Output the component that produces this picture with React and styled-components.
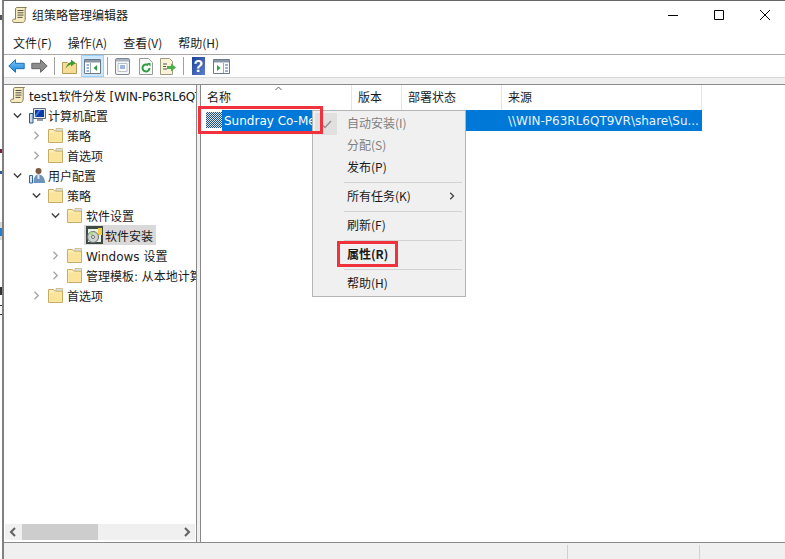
import React from "react";
import styled, { createGlobalStyle } from "styled-components";

const UI_FONT = `"Noto Sans CJK SC", "Liberation Sans", sans-serif`;
const DATA_FONT = `"DejaVu Sans", "Noto Sans CJK SC", sans-serif`;

const Global = createGlobalStyle`
  html, body { margin: 0; padding: 0; background: #fff; }
  body { width: 785px; height: 559px; overflow: hidden; font-family: ${UI_FONT}; font-size: 12px; color: #1a1a1a; }
`;

const Desktop = styled.div`
  display: flex;
  width: 785px;
  height: 559px;
  overflow: hidden;
`;

const Strip = styled.div`
  width: 2px;
  flex: none;
  position: relative;
`;

const Chip = styled.div`
  position: absolute;
  left: 0;
  width: 2px;
  top: ${p => p.$y}px;
  height: ${p => p.$h}px;
  background: ${p => p.$c};
`;

const Win = styled.div`
  width: 783px;
  height: 559px;
  flex: none;
  border-left: 2px solid #808080;
  border-top: 1px solid #666;
  display: flex;
  flex-direction: column;
  background: #fff;
  box-sizing: border-box;
`;

const TitleBar = styled.div`
  height: 27px;
  padding: 0 0 4px 8px;
  display: flex;
  align-items: center;
  gap: 4px;
`;

const Caption = styled.div`
  display: flex;
  margin-left: auto;
  margin-right: -3px;
  align-items: center;
`;

const CapBtn = styled.div`
  width: 46px;
  height: 27px;
  display: flex;
  align-items: center;
  justify-content: center;
`;

const MenuBar = styled.div`
  height: 20px;
  padding: 0 0 2px 9px;
  display: flex;
  gap: 16px;
  align-items: center;
  border-bottom: 1px solid #a9a9a9;
`;

const Toolbar = styled.div`
  height: 22px;
  display: flex;
  align-items: center;
  padding-left: 1px;
  border-bottom: 1px solid #d8d8d8;
`;

const Tool = styled.div`
  width: 23px;
  height: 22px;
  display: flex;
  align-items: center;
  justify-content: center;
  box-sizing: border-box;
  background: ${p => (p.$on ? "#cce8ff" : "transparent")};
  border: 1px solid ${p => (p.$on ? "#99d1ff" : "transparent")};
`;

const Divider = styled.div`
  width: 1px;
  height: 18px;
  background: #a0a0a0;
  margin: 0 3px;
`;

const Gap = styled.div`
  height: 6px;
  background: #f0f0f0;
`;

const Panes = styled.div`
  flex: 1;
  min-height: 0;
  display: flex;
  gap: 3px;
  background: #f0f0f0;
  border-top: 1px solid #8a8a8a;
  border-bottom: 1px solid #8a8a8a;
  font-family: ${DATA_FONT};
`;

const TreePane = styled.div`
  width: 191px;
  border-right: 1px solid #8a8a8a;
  background: #fff;
  display: flex;
  flex-direction: column;
  padding: 0 0 1px 1px;
`;

const Tree = styled.div`
  flex: 1;
`;

const TreeRow = styled.div`
  height: 20px;
  display: flex;
  align-items: center;
  padding-left: ${p => p.$depth * 19 + 3}px;
  white-space: nowrap;
  overflow: hidden;
`;

const Twist = styled.div`
  width: 19px;
  flex: none;
  display: flex;
  justify-content: center;
`;

const Node = styled.div`
  display: flex;
  align-items: center;
  height: 20px;
  padding: 0 3px 0 2px;
  background: ${p => (p.$on ? "#d9d9d9" : "transparent")};
  letter-spacing: ${p => (p.$root ? "-0.2px" : "0")};
`;

const NodeIcon = styled.div`
  width: 17px;
  height: 17px;
  flex: none;
  margin-right: 2px;
  display: flex;
  align-items: center;
`;

const HScroll = styled.div`
  height: 16px;
  background: #f0f0f0;
  margin: 0 1px 1px 0;
  display: flex;
  align-items: center;
  justify-content: space-between;
  position: relative;
`;

const Thumb = styled.div`
  position: absolute;
  left: 17px;
  width: 76px;
  top: 0;
  bottom: 0;
  background: #cdcdcd;
`;

const ListPane = styled.div`
  flex: 1;
  background: #fff;
  border-left: 1px solid #8a8a8a;
  position: relative;
`;

const Head = styled.div`
  display: flex;
  height: 25px;
`;

const HeadCell = styled.div`
  width: ${p => p.$w}px;
  box-sizing: border-box;
  padding: 2px 0 0 6px;
  border-right: 1px solid #e5e5e5;
  line-height: 20px;
  position: relative;
  font-family: ${UI_FONT};
`;

const SortCaret = styled.svg`
  position: absolute;
  left: 74px;
  top: 1px;
`;

const Row = styled.div`
  display: flex;
  height: 21px;
  line-height: 23px;
  width: 501px;
`;

const RowIcon = styled.div`
  width: 16px;
  height: 16px;
  margin: 2px 0 0 5px;
  flex: none;
  background: repeating-conic-gradient(#1c4f8c 0 25%, #dfe8ee 0 50%) 0 0 / 2px 2px;
`;

const RowName = styled.div`
  width: 127px;
  background: #0078d7;
  color: #fff;
  padding-left: 2px;
  white-space: nowrap;
  overflow: hidden;
  box-sizing: border-box;
`;

const RowRest = styled.div`
  flex: 1;
  background: #0078d7;
  color: #e8f3fb;
  padding-left: 159px;
  white-space: nowrap;
  overflow: hidden;
`;

const Mark = styled.div`
  position: absolute;
  box-sizing: border-box;
  border: 3px solid #f0323c;
  left: ${p => p.$x}px;
  top: ${p => p.$y}px;
  width: ${p => p.$w}px;
  height: ${p => p.$h}px;
  z-index: 5;
`;

const Menu = styled.div`
  position: absolute;
  left: 111px;
  top: 25px;
  width: 154px;
  height: 187px;
  box-sizing: border-box;
  background: #f0f0f0;
  border: 1px solid #b5b5b5;
  padding: 1px 0 0 2px;
  z-index: 3;
  font-family: ${UI_FONT};
`;

const MenuItem = styled.div`
  height: 22px;
  line-height: 22px;
  padding-left: 32px;
  color: ${p => (p.$off ? "#7f7f7f" : "#1a1a1a")};
  font-weight: ${p => (p.$bold ? 700 : 400)};
  position: relative;
`;

const MenuSep = styled.div`
  height: 1px;
  background: #d2d2d2;
  margin: 4px 3px 2px 29px;
`;

const CheckBox = styled.div`
  position: absolute;
  left: 0;
  top: 1px;
  width: 22px;
  height: 22px;
  background: #e0e0e0;
  display: flex;
  align-items: center;
  justify-content: center;
`;

const SubArrow = styled.div`
  position: absolute;
  right: 9px;
  top: 7px;
  display: flex;
`;

const Status = styled.div`
  height: 16px;
  background: #f0f0f0;
  display: flex;
  justify-content: flex-end;
`;

const StatusCell = styled.div`
  width: ${p => p.$w}px;
  box-sizing: border-box;
  border-left: 1px solid #d0d0d0;
  margin-top: 2px;
`;

const Chevron = ({ open, dark, size = 9 }) => (
  <svg width={size} height={size} viewBox="0 0 9 9" fill="none" stroke={dark ? "#404040" : "#a6a6a6"} strokeWidth="1.4">
    {open ? <path d="M.8 2.5 4.5 6.2 8.2 2.5" /> : <path d="M2.5.8 6.2 4.5 2.5 8.2" />}
  </svg>
);

const Folder = () => (
  <svg width="15" height="15" viewBox="0 0 15 15">
    <path d="M.5 14.500V1.500h5l1 1.500h8v11.500z" fill="#fdeeb4" stroke="#c8ac66" />
    <path d="M1.500 4.500h12v9h-12z" fill="#fbe399" />
    <path d="M8 .5h6.500v2.500H8z" fill="#d4e4f0" stroke="#c8ac66" strokeWidth=".7" />
  </svg>
);

const Scroll = () => (
  <svg width="16" height="18" viewBox="0 0 16 18">
    <path d="M5 1.500h9.500c-1.200.8-1.500 2-1.300 3.500v8c0 2-1 3.500-2.700 3.500H2c-1-.4-1.500-1-1.500-2 0-.8.600-1.300 1.500-1.300h1.500V3c0-.8.600-1.500 1.500-1.500z" fill="#f5ebbf" stroke="#8a7f5c" />
    <path d="M5.500 4.500h6M5.500 6.800h6M5.500 9.100h6M5.500 11.400h5" stroke="#55554d" />
  </svg>
);

const Monitor = () => (
  <svg width="17" height="17" viewBox="0 0 17 17">
    <path d="M4.500 1.500h12v10h-12z" fill="#e3e8ee" stroke="#5f6c7c" />
    <path d="M6 3h9v7H6z" fill="#0c3aa6" />
    <path d="M6 8l4-5h2L7 10H6z" fill="#3f78d8" />
    <path d="M8 12h6v2H8z" fill="#8f9aa6" />
    <path d="M.5 6.500h3.500v9.500H.5z" fill="#cfd8e2" stroke="#1f5fa0" />
  </svg>
);

const Users = () => (
  <svg width="17" height="17" viewBox="0 0 17 17">
    <circle cx="9.500" cy="4" r="3" fill="#7d5a44" />
    <path d="M4.500 16c0-6 2-8.500 5-8.500s6.500 2.500 6.500 8.500z" fill="#6f93bd" />
    <path d="M8.500 8h2v4h-2z" fill="#dce7f2" />
    <path d="M.5 8.500h3v7.500h-3z" fill="#dce5ee" stroke="#2a68a5" />
  </svg>
);

const Disc = () => (
  <svg width="17" height="18" viewBox="0 0 17 18">
    <path d="M0 0h17v18H0z" fill="#3f4a44" />
    <path d="M2 3h13v13H2z" fill="#e9efe9" />
    <path d="M12 2h4v7h-4z" fill="#f0d040" />
    <circle cx="7" cy="11" r="5.500" fill="#cdd5d0" stroke="#6f6f6f" />
    <path d="M7 11 3 7.500A5.500 5.500 0 0 1 7 5.500z" fill="#a9d68a" />
    <circle cx="7" cy="11" r="1.500" fill="#fff" stroke="#6f6f6f" />
  </svg>
);

const Back = () => (
  <svg width="17" height="14" viewBox="0 0 17 14">
    <defs>
      <linearGradient id="backFill" x1="0" y1="0" x2="0" y2="1">
        <stop offset="0" stopColor="#7cc8f6" />
        <stop offset="1" stopColor="#1b83d8" />
      </linearGradient>
    </defs>
    <path d="M7.500.7.800 7l6.700 6.300V9.700h8.700V4.300H7.500z" fill="url(#backFill)" stroke="#1c70b8" />
  </svg>
);

const Forward = () => (
  <svg width="17" height="14" viewBox="0 0 17 14">
    <path d="M9.500.7 16.200 7l-6.700 6.300V9.700H.8V4.300h8.700z" fill="#8c8c8c" stroke="#666" />
  </svg>
);

const UpFolder = () => (
  <svg width="15" height="16" viewBox="0 0 15 16">
    <path d="M.5 4.500h5l1 1h8v10H.500z" fill="#f6dd96" stroke="#b59a58" />
    <path d="M3.500 11c1-4 3-6.500 5.500-7V1.500l4.500 3.500L9 8.500V6.500C7 7 5 8.500 3.500 11z" fill="#3f9a2f" />
  </svg>
);

const Pane = ({ side }) => (
  <svg width="17" height="15" viewBox="0 0 17 15">
    <path d="M.5.500h16v14H.500z" fill="#fff" stroke="#6c7884" />
    <path d="M1 1h15v2.500H1z" fill="#8898a8" />
    <path d={side === "left" ? "M6.500 4v10" : "M10.500 4v10"} stroke="#9aa6b2" />
    {side === "left" ? (
      <path d="M13 6v6l-3.500-3z" fill="#2f9e3f" />
    ) : (
      <path d="M4 6v6l3.500-3z" fill="#2f9e3f" />
    )}
    <path d={side === "left" ? "M2.500 6h2.500M2.500 9h2.500M2.500 12h2.500" : "M12 6h3M12 9h3M12 12h3"} stroke="#2a68b5" />
  </svg>
);

const Props = () => (
  <svg width="15" height="17" viewBox="0 0 15 17">
    <rect x=".5" y=".5" width="14" height="16" rx="1.500" fill="#f4f6f8" stroke="#7b8794" />
    <path d="M1 1h13v2.500H1z" fill="#aab4be" />
    <path d="M3 5.500h9v8H3z" fill="#fff" stroke="#b8c0c8" />
    <path d="M5 8h5M5 10h5" stroke="#3a70b8" />
  </svg>
);

const Refresh = () => (
  <svg width="14" height="17" viewBox="0 0 14 17">
    <path d="M.5.500h9l4 4v12H.500z" fill="#f8f8f8" stroke="#9a9a9a" />
    <path d="M10.500 10a3.500 3.500 0 1 1-1.200-2.700" fill="none" stroke="#2f9e3f" strokeWidth="2" />
    <path d="M8 5h3.500v3.500z" fill="#2f9e3f" />
  </svg>
);

const Export = () => (
  <svg width="17" height="17" viewBox="0 0 17 17">
    <path d="M.5.500h9l3 3v13H.500z" fill="#faf3d8" stroke="#a09a80" />
    <path d="M3 6h4M3 8.500h3M3 11h4" stroke="#555" />
    <path d="M7 8h4V5.500l5 4-5 4V11H7z" fill="#4cb04a" />
  </svg>
);

const Help = () => (
  <svg width="13" height="18" viewBox="0 0 13 18">
    <defs>
      <linearGradient id="helpFill" x1="0" y1="0" x2="1" y2="1">
        <stop offset="0" stopColor="#1d3f97" />
        <stop offset="1" stopColor="#5f7fd0" />
      </linearGradient>
    </defs>
    <path d="M0 0h13v18H0z" fill="url(#helpFill)" />
    <text x="6.500" y="14.500" textAnchor="middle" fontSize="16" fontWeight="700" fontFamily="Liberation Sans" fill="#fff">?</text>
  </svg>
);

const tree = [
  { d: 0, icon: <Scroll />, label: "test1软件分发 [WIN-P63RL6QT9VR.test.com] 策略", root: true },
  { d: 0, open: true, icon: <Monitor />, label: "计算机配置" },
  { d: 1, closed: true, icon: <Folder />, label: "策略" },
  { d: 1, closed: true, icon: <Folder />, label: "首选项" },
  { d: 0, open: true, icon: <Users />, label: "用户配置" },
  { d: 1, open: true, icon: <Folder />, label: "策略" },
  { d: 2, open: true, icon: <Folder />, label: "软件设置" },
  { d: 3, icon: <Disc />, label: "软件安装", on: true },
  { d: 2, closed: true, icon: <Folder />, label: "Windows 设置" },
  { d: 2, closed: true, icon: <Folder />, label: "管理模板: 从本地计算机检索的策略定义" },
  { d: 1, closed: true, icon: <Folder />, label: "首选项" },
];

// bits of the desktop behind the window, showing left of its border
const chips = [
  { y: 15, h: 5, c: "#555" },
  { y: 149, h: 4, c: "#7a2040" },
  { y: 171, h: 3, c: "#2a5aa0" },
  { y: 222, h: 18, c: "#d8d8d8" },
  { y: 228, h: 8, c: "#1f7fd0" },
  { y: 287, h: 8, c: "#333" },
  { y: 305, h: 1, c: "#333" },
  { y: 314, h: 1, c: "#333" },
];

export default function App() {
  return (
    <>
      <Global />
      <Desktop>
        <Strip>
          {chips.map(c => (
            <Chip key={c.y} $y={c.y} $h={c.h} $c={c.c} />
          ))}
        </Strip>
        <Win>
          <TitleBar>
            <Scroll />
            <span>组策略管理编辑器</span>
            <Caption>
              <CapBtn>
                <svg width="10" height="10" viewBox="0 0 10 10"><path d="M0 5.500h10" stroke="#000" /></svg>
              </CapBtn>
              <CapBtn>
                <svg width="10" height="10" viewBox="0 0 10 10"><path d="M.5.500h9v9h-9z" fill="none" stroke="#000" /></svg>
              </CapBtn>
              <CapBtn>
                <svg width="10" height="10" viewBox="0 0 10 10"><path d="M0 0l10 10M10 0 0 10" stroke="#000" /></svg>
              </CapBtn>
            </Caption>
          </TitleBar>
          <MenuBar>
            <span>文件(F)</span>
            <span>操作(A)</span>
            <span>查看(V)</span>
            <span>帮助(H)</span>
          </MenuBar>
          <Toolbar>
            <Tool><Back /></Tool>
            <Tool><Forward /></Tool>
            <Divider />
            <Tool><UpFolder /></Tool>
            <Tool $on><Pane side="left" /></Tool>
            <Divider />
            <Tool><Props /></Tool>
            <Tool><Refresh /></Tool>
            <Tool><Export /></Tool>
            <Divider />
            <Tool><Help /></Tool>
            <Tool><Pane side="right" /></Tool>
          </Toolbar>
          <Gap />
          <Panes>
            <TreePane>
              <Tree>
                {tree.map((n, i) => (
                  <TreeRow key={i} $depth={n.d}>
                    {!n.root && (
                      <Twist>
                        {n.open && <Chevron open dark />}
                        {n.closed && <Chevron />}
                      </Twist>
                    )}
                    <Node $on={n.on} $root={n.root}>
                      <NodeIcon>{n.icon}</NodeIcon>
                      <span>{n.label}</span>
                    </Node>
                  </TreeRow>
                ))}
              </Tree>
              <HScroll>
                <Thumb />
                <svg width="17" height="16" viewBox="0 0 17 16"><path d="M10 4 6 8l4 4" fill="none" stroke="#606060" strokeWidth="2" /></svg>
                <svg width="17" height="16" viewBox="0 0 17 16"><path d="M7 4l4 4-4 4" fill="none" stroke="#606060" strokeWidth="2" /></svg>
              </HScroll>
            </TreePane>
            <ListPane>
              <Head>
                <HeadCell $w={151}>
                  名称
                  <SortCaret width="7" height="5" viewBox="0 0 7 5">
                    <path d="M.5 4 3.500 1 6.500 4" fill="none" stroke="#666" />
                  </SortCaret>
                </HeadCell>
                <HeadCell $w={50}>版本</HeadCell>
                <HeadCell $w={100}>部署状态</HeadCell>
                <HeadCell $w={200}>来源</HeadCell>
              </Head>
              <Row>
                <RowIcon />
                <RowName>Sundray Co-Meeting</RowName>
                <RowRest>\\WIN-P63RL6QT9VR\share\Su...</RowRest>
              </Row>
              <Mark $x={-3} $y={21} $w={125} $h={28} />
              <Menu>
                <MenuItem $off>
                  <CheckBox>
                    <svg width="11" height="9" viewBox="0 0 11 9"><path d="M1 4.500 4 7.500 10 1" fill="none" stroke="#8f8f8f" strokeWidth="1.300" /></svg>
                  </CheckBox>
                  自动安装(I)
                </MenuItem>
                <MenuItem $off>分配(S)</MenuItem>
                <MenuItem>发布(P)</MenuItem>
                <MenuSep />
                <MenuItem>
                  所有任务(K)
                  <SubArrow><Chevron dark size={8} /></SubArrow>
                </MenuItem>
                <MenuSep />
                <MenuItem>刷新(F)</MenuItem>
                <MenuSep />
                <MenuItem $bold>属性(R)</MenuItem>
                <MenuSep />
                <MenuItem>帮助(H)</MenuItem>
              </Menu>
              <Mark $x={136} $y={156} $w={61} $h={26} />
            </ListPane>
          </Panes>
          <Status>
            <StatusCell $w={132} />
            <StatusCell $w={86} />
          </Status>
        </Win>
      </Desktop>
    </>
  );
}
